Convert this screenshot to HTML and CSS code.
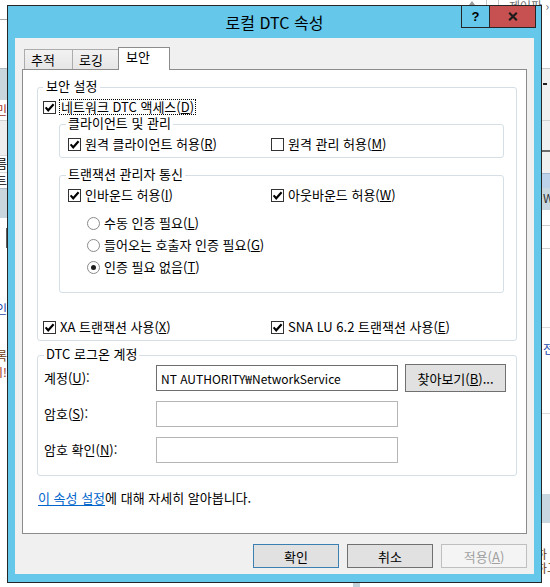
FILE: index.html
```html
<!DOCTYPE html>
<html lang="ko">
<head>
<meta charset="utf-8">
<title>로컬 DTC 속성</title>
<link rel="stylesheet" href="styles.css">
</head>
<body>
<div class="desktop">
  <div class="bg-top">
    <div class="bg-top-left"></div>
    <div class="bg-top-right">
      <span class="up-arrow"></span>
      <span class="vline"></span>
      <span class="vline vline-2"></span>
      <span class="crumb">제어판 ›</span>
    </div>
  </div>
  <div class="bg-main">
    <div class="strip strip-left">
      <div class="band l1"></div>
      <div class="band l2"></div>
      <div class="band l3 frag-l"><span class="c-red">민</span></div>
      <div class="band l4"></div>
      <div class="band l5 frag-l"><span>름</span></div>
      <div class="band l6 frag-l"><span>트</span></div>
      <div class="band l7"></div>
      <div class="band l8"></div>
      <div class="band l9"></div>
      <div class="band l10"></div>
      <div class="band l11 frag-l"><span class="c-link">인</span></div>
      <div class="band l12"></div>
      <div class="band l13 frag-l"><span class="c-brown">록</span></div>
      <div class="band l14 frag-l"><span class="c-red">시!</span></div>
      <div class="band fill"></div>
    </div>
    <div class="bg-center"><div class="bg-center-bit"></div></div>
    <div class="strip strip-right">
      <div class="band r1"></div>
      <div class="band r2"><span class="dash"></span></div>
      <div class="band r3"></div>
      <div class="band r4"></div>
      <div class="band r5"></div>
      <div class="band r6"></div>
      <div class="band r7 frag-r"><span>W</span></div>
      <div class="band r8"></div>
      <div class="band r9"></div>
      <div class="band r10"></div>
      <div class="band r11 frag-r"><span class="c-link">전</span></div>
      <div class="band r12"></div>
      <div class="band r13"></div>
      <div class="band r14">
        <div class="frag-r r14a"><span class="c-brown">하</span></div>
        <div class="frag-r r14b"><span class="c-brown">하고</span></div>
      </div>
    </div>
  </div>

  <div class="window">
    <div class="titlebar">
      <div class="title">로컬 DTC 속성</div>
      <div class="caption-btns">
        <div class="cap-btn help">?</div>
        <div class="cap-btn close">
          <svg width="10" height="9" viewBox="0 0 10 9"><path d="M1.2 0.8 L8.8 8.2 M8.8 0.8 L1.2 8.2" stroke="#1b1b1b" stroke-width="2.2" fill="none"/></svg>
        </div>
      </div>
    </div>
    <div class="client">
      <div class="tabs">
        <div class="tab tab-1">추적</div>
        <div class="tab tab-2">로깅</div>
        <div class="tab tab-active">보안</div>
      </div>
      <div class="panel">
        <fieldset class="group outer">
          <legend>보안 설정</legend>
          <div class="row">
            <span class="cb"><svg width="11" height="11" viewBox="0 0 11 11"><path d="M1.6 5.4 L4.2 8.3 L9.6 2.2" stroke="#000" stroke-width="2.1" fill="none"/></svg></span>
            <span class="focus">네트워크 DTC 액세스(<u>D</u>)</span>
          </div>
          <fieldset class="group sub">
            <legend>클라이언트 및 관리</legend>
            <div class="cols">
              <div class="row">
                <span class="cb"><svg width="11" height="11" viewBox="0 0 11 11"><path d="M1.6 5.4 L4.2 8.3 L9.6 2.2" stroke="#000" stroke-width="2.1" fill="none"/></svg></span>
                <span>원격 클라이언트 허용(<u>R</u>)</span>
              </div>
              <div class="row">
                <span class="cb"></span>
                <span>원격 관리 허용(<u>M</u>)</span>
              </div>
            </div>
          </fieldset>
          <fieldset class="group sub sub-tm">
            <legend>트랜잭션 관리자 통신</legend>
            <div class="cols">
              <div class="row">
                <span class="cb"><svg width="11" height="11" viewBox="0 0 11 11"><path d="M1.6 5.4 L4.2 8.3 L9.6 2.2" stroke="#000" stroke-width="2.1" fill="none"/></svg></span>
                <span>인바운드 허용(<u>I</u>)</span>
              </div>
              <div class="row">
                <span class="cb"><svg width="11" height="11" viewBox="0 0 11 11"><path d="M1.6 5.4 L4.2 8.3 L9.6 2.2" stroke="#000" stroke-width="2.1" fill="none"/></svg></span>
                <span>아웃바운드 허용(<u>W</u>)</span>
              </div>
            </div>
            <div class="radios">
              <div class="row"><span class="radio"></span><span>수동 인증 필요(<u>L</u>)</span></div>
              <div class="row"><span class="radio"></span><span>들어오는 호출자 인증 필요(<u>G</u>)</span></div>
              <div class="row"><span class="radio radio-on"></span><span>인증 필요 없음(<u>T</u>)</span></div>
            </div>
          </fieldset>
          <div class="cols cols-xa">
            <div class="row">
              <span class="cb"><svg width="11" height="11" viewBox="0 0 11 11"><path d="M1.6 5.4 L4.2 8.3 L9.6 2.2" stroke="#000" stroke-width="2.1" fill="none"/></svg></span>
              <span>XA 트랜잭션 사용(<u>X</u>)</span>
            </div>
            <div class="row">
              <span class="cb"><svg width="11" height="11" viewBox="0 0 11 11"><path d="M1.6 5.4 L4.2 8.3 L9.6 2.2" stroke="#000" stroke-width="2.1" fill="none"/></svg></span>
              <span>SNA LU 6.2 트랜잭션 사용(<u>E</u>)</span>
            </div>
          </div>
        </fieldset>

        <fieldset class="group logon">
          <legend>DTC 로그온 계정</legend>
          <div class="form">
            <span>계정(<u>U</u>):</span>
            <input class="field field-dark" type="text" value="NT AUTHORITY₩NetworkService">
            <button class="browse" type="button">찾아보기(<u>B</u>)...</button>
            <span>암호(<u>S</u>):</span>
            <input class="field" type="password">
            <span></span>
            <span>암호 확인(<u>N</u>):</span>
            <input class="field" type="password">
            <span></span>
          </div>
        </fieldset>

        <p class="learn"><a class="link">이 속성 설정</a>에 대해 자세히 알아봅니다.</p>
      </div>
      <div class="buttons">
        <button class="btn btn-default" type="button">확인</button>
        <button class="btn" type="button">취소</button>
        <button class="btn btn-disabled" type="button">적용(<u>A</u>)</button>
      </div>
    </div>
  </div>
</div>
</body>
</html>
```
FILE: styles.css
```css
* { box-sizing: border-box; }
html, body { margin: 0; padding: 0; }
body {
  width: 550px;
  height: 587px;
  overflow: hidden;
  background: #fff;
  font-family: "Noto Sans CJK KR", "Noto Sans", sans-serif;
  font-size: 13px;
  line-height: 16px;
  color: #000;
}
u { text-decoration: underline; text-underline-offset: 1px; }

.desktop {
  position: relative;
  width: 550px;
  height: 587px;
  display: flex;
  flex-direction: column;
  overflow: hidden;
}

/* ---------- background application ---------- */
.bg-top { flex: none; height: 20px; display: flex; }
.bg-top-left { width: 7px; border-bottom: 1px solid #a9a9a9; }
.bg-top-right { flex: 1; display: flex; padding-left: 462px; }
.up-arrow {
  width: 0; height: 0; margin-top: 1px;
  border-left: 3px solid transparent;
  border-right: 3px solid transparent;
  border-bottom: 4px solid #9a9a9a;
}
.vline { width: 1px; background: #c6c6c6; margin-left: 11px; }
.vline-2 { margin-left: 11px; }
.crumb { margin-left: 10px; color: #6f6f6f; font-size: 12px; line-height: 12px; white-space: nowrap; }

.bg-main {
  flex: 1;
  display: grid;
  grid-template-columns: 7px 1fr 8px;
  min-height: 0;
}
.strip { display: flex; flex-direction: column; overflow: hidden; }
.band { flex: none; }
.band.fill { flex: 1; }
.frag-l, .frag-r { font-size: 12px; line-height: 12px; }
.frag-l { display: flex; justify-content: flex-end; overflow: hidden; white-space: nowrap; }
.frag-r { display: flex; overflow: hidden; white-space: nowrap; }
.frag-r span { margin-left: -4px; }
.c-red { color: #a0302a; }
.c-link { color: #1d49a8; }
.c-brown { color: #6b3c12; }

.l1 { height: 48px; }
.l2 { height: 32px; background: #c9d6de; border-top: 1px solid #aebcc6; }
.l3 { height: 20px; padding-top: 4px; }
.l4 { height: 35px; background: #eeeeee; border-top: 1px solid #d0d0d0; }
.l5 { height: 17px; border-top: 1px solid #d9d9d9; padding-top: 2px; }
.l6 { height: 16px; border-top: 1px solid #d9d9d9; padding-top: 2px; }
.l7 { height: 30px; background: #c9d6de; border-top: 1px solid #aebcc6; }
.l8 { height: 10px; }
.l9 { height: 20px; border-right: 1px solid #5e5e5e; }
.l10 { height: 52px; }
.l11 { height: 18px; padding-top: 3px; }
.l12 { height: 32px; }
.l13 { height: 14px; }
.l14 { height: 16px; padding-top: 2px; }

.bg-center { display: flex; flex-direction: column; justify-content: flex-end; }
.bg-center-bit { width: 7px; height: 4px; margin-left: 346px; background: #c5d2da; }

.r1 { height: 48px; }
.r2 { height: 52px; background: #f0f0f0; border-top: 1px solid #c6c6c6; padding-top: 14px; }
.dash { display: block; width: 4px; height: 2px; margin-left: 1px; background: #222; }
.r3 { height: 30px; background: #f0f0f0; border-top: 1px solid #d3d3d3; }
.r4 { height: 2px; background: #6b6b6b; }
.r5 { height: 21px; background: #f0f0f0; }
.r6 { height: 15px; background: #bcd2ea; border-top: 1px solid #9fb7cf; }
.r7 { height: 22px; background: #c9d8e0; padding-top: 4px; }
.r7 span { margin-left: 1px; color: #333; }
.r8 { height: 15px; }
.r9 { height: 23px; border-top: 1px solid #cfcfcf; }
.r10 { height: 79px; border-top: 1px solid #cfcfcf; }
.r11 { height: 86px; border-top: 1px solid #dcdcdc; padding-top: 15px; }
.r11 span { margin-left: 1px; }
.r12 { height: 81px; border-top: 1px solid #dcdcdc; }
.r13 { height: 29px; background: #c9d8e0; }
.r14 { flex: 1; padding-top: 25px; display: flex; flex-direction: column; gap: 2px; }
.r14a span, .r14b span { margin-left: -6px; }

/* ---------- dialog window ---------- */
.window {
  position: absolute;
  left: 7px;
  top: 5px;
  width: 535px;
  height: 578px;
  border: 1px solid #262626;
  background: #65c8ea;
  display: flex;
  flex-direction: column;
}
.titlebar {
  flex: none;
  height: 32px;
  display: grid;
  grid-template-columns: 1fr auto 1fr;
}
.title {
  grid-column: 2;
  align-self: center;
  font-size: 16px;
  line-height: 20px;
  white-space: nowrap;
}
.caption-btns {
  grid-column: 3;
  justify-self: end;
  align-self: start;
  display: flex;
  margin-right: 5px;
}
.cap-btn {
  height: 22px;
  border-bottom: 1px solid #262626;
  display: flex;
  align-items: center;
  justify-content: center;
}
.help {
  width: 28px;
  border-left: 1px solid #262626;
  font-family: "Liberation Sans", sans-serif;
  font-weight: 700;
  font-size: 13px;
  line-height: 13px;
}
.close {
  width: 47px;
  border-left: 1px solid #262626;
  border-right: 1px solid #262626;
  background: #c75050;
}

.client {
  flex: 1;
  margin: 0 7px 8px;
  background: #f0f0f0;
  padding: 9px 7px 6px;
  display: flex;
  flex-direction: column;
  min-height: 0;
}

.tabs {
  flex: none;
  height: 22px;
  display: flex;
  align-items: flex-end;
  padding-left: 2px;
  position: relative;
  z-index: 1;
}
.tab {
  height: 20px;
  border: 1px solid #acacac;
  border-bottom: 0;
  background: linear-gradient(#f2f2f2, #e6e6e6);
  padding: 0 0 0 6px;
  line-height: 19px;
  white-space: nowrap;
}
.tab-1 { width: 49px; }
.tab-2 { width: 47px; margin-left: -1px; }
.tab-active {
  width: 52px;
  margin-left: -1px;
  height: 23px;
  margin-bottom: -1px;
  background: #fff;
  border-color: #8c8c8c;
  line-height: 18px;
  padding-left: 7px;
}

.panel {
  flex: 1;
  border: 1px solid #8c8c8c;
  background: #fff;
  padding: 8px 9px 0 14px;
  min-height: 0;
}

.group {
  margin: 0;
  border: 1px solid #d5dfe5;
  border-radius: 3px;
  min-width: 0;
}
.group > legend {
  padding: 0 3px 2px;
  line-height: 16px;
  white-space: nowrap;
}
.outer { padding: 3px 5px 5px 5px; }
.sub { margin: 0 7px 0 16px; padding: 3px 8px 5px 8px; }
.sub > legend { padding: 0 2px 2px; margin-left: -2px; }
.sub-tm { margin-top: 8px; padding-bottom: 17px; }

.row {
  display: flex;
  align-items: center;
  height: 16px;
  white-space: nowrap;
}
.cols { display: grid; grid-template-columns: 203px 1fr; }
.cols-xa { grid-template-columns: 228px 1fr; margin-top: 26px; }

.cb {
  flex: none;
  width: 13px;
  height: 13px;
  border: 1px solid #333;
  background: #fff;
  margin-right: 4px;
  display: flex;
}
.focus {
  margin-left: -1px;
  border: 1px dotted #000;
  padding: 0 1px;
  height: 16px;
  line-height: 14px;
}
.radios {
  margin-top: 12px;
  padding-left: 19px;
  display: flex;
  flex-direction: column;
  gap: 6px;
}
.radio {
  flex: none;
  width: 13px;
  height: 13px;
  border: 1px solid #8a8a8a;
  border-radius: 50%;
  background: #fff;
  margin-right: 4px;
  display: flex;
  align-items: center;
  justify-content: center;
}
.radio-on::after {
  content: "";
  width: 5px;
  height: 5px;
  border-radius: 50%;
  background: #1e1e1e;
}

.logon { margin-top: 5px; padding: 0 10px 11px 6px; }
.logon > legend { padding: 0 2px 2px; }
.form {
  display: grid;
  grid-template-columns: 112px 242px auto;
  grid-auto-rows: 28px;
  row-gap: 8px;
  align-items: center;
  white-space: nowrap;
}
.field {
  width: 242px;
  height: 26px;
  border: 1px solid #b5b5b5;
  background: #fff;
  padding: 0 4px;
  margin: 0;
  font-family: inherit;
  font-size: 12px;
  color: #000;
  outline: none;
}
.field-dark { border-color: #6e6e6e; }
.browse {
  justify-self: start;
  margin: 0 0 0 7px;
  width: 101px;
  height: 28px;
  border: 1px solid #707070;
  background: #e1e1e1;
  font-family: inherit;
  font-size: 13px;
  color: #000;
  padding: 0;
}

.learn { margin: 14px 0 0 1px; line-height: 16px; }
.link { color: #0066cc; text-decoration: underline; text-underline-offset: 2px; }

.buttons {
  flex: none;
  margin-top: 10px;
  display: flex;
  justify-content: flex-end;
  gap: 8px;
}
.btn {
  width: 86px;
  height: 24px;
  border: 1px solid #707070;
  background: #e1e1e1;
  font-family: inherit;
  font-size: 13px;
  color: #000;
  padding: 0;
}
.btn-default { border-color: #3c7fb1; }
.btn-disabled { border-color: #bfbfbf; background: #f4f4f4; color: #a0a0a0; }
```
